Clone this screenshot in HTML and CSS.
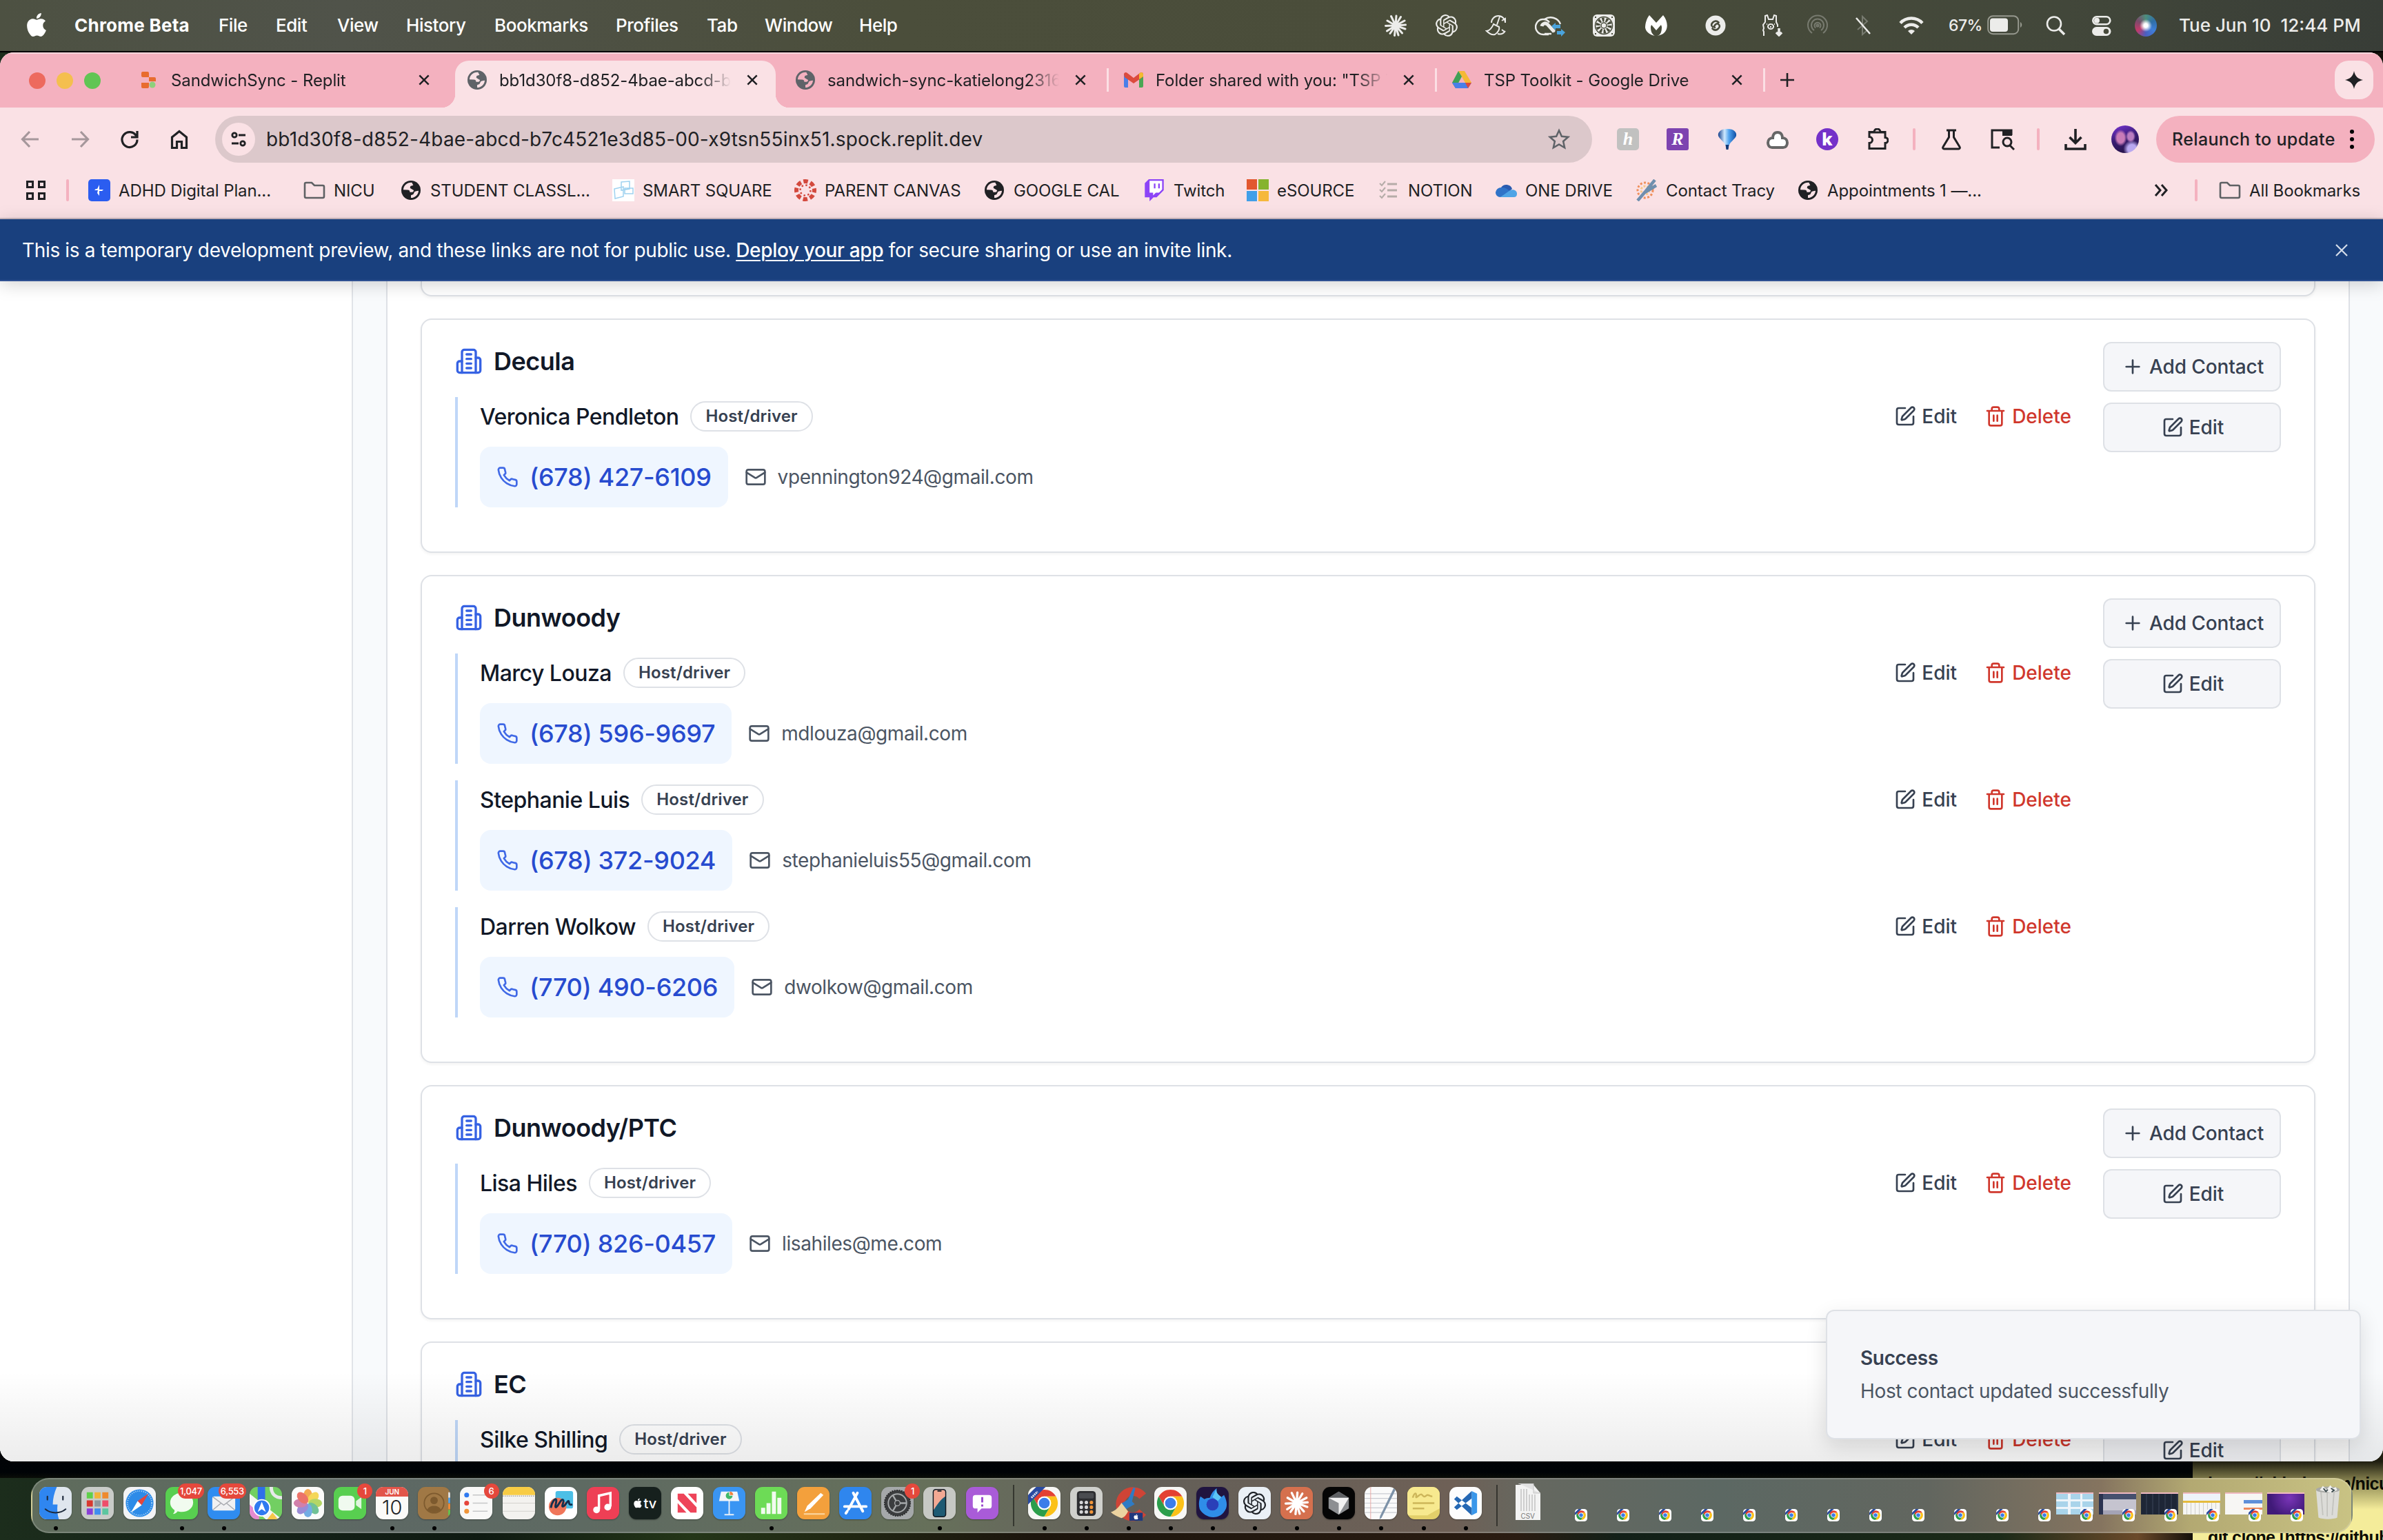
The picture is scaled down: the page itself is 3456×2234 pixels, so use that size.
FILE: index.html
```html
<!DOCTYPE html>
<html lang="en">
<head>
<meta charset="utf-8">
<title>SandwichSync</title>
<link rel="stylesheet" href="styles.css">
</head>
<body>
<svg class="defs" width="0" height="0">
  <linearGradient id="g-balloon"><stop offset="0" stop-color="#123f8c"/><stop offset=".35" stop-color="#cfeaff"/><stop offset=".6" stop-color="#4fa2ee"/><stop offset="1" stop-color="#0f4da3"/></linearGradient>
  <symbol id="building" viewBox="0 0 24 24"><path d="M6 22V4a2 2 0 0 1 2-2h8a2 2 0 0 1 2 2v18Z"/><path d="M6 12H4a2 2 0 0 0-2 2v6a2 2 0 0 0 2 2h2"/><path d="M18 9h2a2 2 0 0 1 2 2v9a2 2 0 0 1-2 2h-2"/><path d="M10 6h4M10 10h4M10 14h4M10 18h4"/></symbol>
  <symbol id="phone" viewBox="0 0 24 24"><path d="M22 16.92v3a2 2 0 0 1-2.18 2 19.79 19.79 0 0 1-8.63-3.07 19.5 19.5 0 0 1-6-6 19.79 19.79 0 0 1-3.07-8.67A2 2 0 0 1 4.11 2h3a2 2 0 0 1 2 1.72 12.84 12.84 0 0 0 .7 2.81 2 2 0 0 1-.45 2.11L8.09 9.91a16 16 0 0 0 6 6l1.27-1.27a2 2 0 0 1 2.11-.45 12.84 12.84 0 0 0 2.81.7A2 2 0 0 1 22 16.92z"/></symbol>
  <symbol id="mail" viewBox="0 0 24 24"><rect x="2" y="4" width="20" height="16" rx="2"/><path d="m22 7-8.97 5.7a1.94 1.94 0 0 1-2.06 0L2 7"/></symbol>
  <symbol id="pen" viewBox="0 0 24 24"><path d="M12 3H5a2 2 0 0 0-2 2v14a2 2 0 0 0 2 2h14a2 2 0 0 0 2-2v-7"/><path d="M18.375 2.625a1 1 0 0 1 3 3l-9.013 9.014a2 2 0 0 1-.853.505l-2.873.84a.5.5 0 0 1-.62-.62l.84-2.873a2 2 0 0 1 .506-.852z"/></symbol>
  <symbol id="trash" viewBox="0 0 24 24"><path d="M3 6h18M19 6v14a2 2 0 0 1-2 2H7a2 2 0 0 1-2-2V6M8 6V4a2 2 0 0 1 2-2h4a2 2 0 0 1 2 2v2M10 11v6M14 11v6"/></symbol>
  <symbol id="plus" viewBox="0 0 24 24"><path d="M5 12h14M12 5v14"/></symbol>
  <symbol id="x" viewBox="0 0 24 24"><path d="M4 4l16 16M20 4L4 20"/></symbol>
  <symbol id="folder" viewBox="0 0 32 32"><path d="M2 7a2 2 0 0 1 2-2h8l4 4h12a2 2 0 0 1 2 2v14a2 2 0 0 1-2 2H4a2 2 0 0 1-2-2z" fill="none" stroke="#5f6164" stroke-width="2.6"/></symbol>
  <symbol id="globe" viewBox="0 0 24 24"><circle cx="12" cy="12" r="10.5" fill="currentColor"/><path d="M13 3.6C8 3.2 4 6.600 3.700 11.500L8.500 11.600C10 11.600 10.800 12.500 10.800 14L13.200 14C14.500 14 15 13 15 12L12.500 10.500L11 9.500L11.500 7.500L14.500 6.500zM12 20.300L12 17.500L14.500 16.500L16 13.500L18.500 12.800L20.300 12.500C20 16.500 16.500 20.300 12 20.300z" class="globe-land"/></symbol>
  <symbol id="apple" viewBox="0 0 24 24"><path d="M12.152 6.896c-.948 0-2.415-1.078-3.96-1.04-2.04.027-3.91 1.183-4.961 3.014-2.117 3.675-.546 9.103 1.519 12.09 1.013 1.454 2.208 3.09 3.792 3.039 1.52-.065 2.09-.987 3.935-.987 1.831 0 2.35.987 3.96.948 1.637-.026 2.676-1.48 3.676-2.948 1.156-1.688 1.636-3.325 1.662-3.415-.039-.013-3.182-1.221-3.22-4.857-.026-3.04 2.48-4.494 2.597-4.559-1.429-2.09-3.623-2.324-4.39-2.376-2-.156-3.675 1.09-4.61 1.09zM15.53 3.83c.843-1.012 1.4-2.427 1.245-3.83-1.207.052-2.662.805-3.532 1.818-.78.896-1.454 2.338-1.273 3.714 1.338.104 2.715-.688 3.559-1.701"/></symbol>
  <symbol id="openai" viewBox="0 0 24 24"><path d="M22.2819 9.8211a5.9847 5.9847 0 0 0-.5157-4.9108 6.0462 6.0462 0 0 0-6.5098-2.9A6.0651 6.0651 0 0 0 4.9807 4.1818a5.9847 5.9847 0 0 0-3.9977 2.9 6.0462 6.0462 0 0 0 .7427 7.0966 5.98 5.98 0 0 0 .511 4.9107 6.051 6.051 0 0 0 6.5146 2.9001A5.9847 5.9847 0 0 0 13.2599 24a6.0557 6.0557 0 0 0 5.7718-4.2058 5.9894 5.9894 0 0 0 3.9977-2.9001 6.0557 6.0557 0 0 0-.7475-7.0729zm-9.022 12.6081a4.4755 4.4755 0 0 1-2.8764-1.0408l.1419-.0804 4.7783-2.7582a.7948.7948 0 0 0 .3927-.6813v-6.7369l2.02 1.1686a.071.071 0 0 1 .038.052v5.5826a4.504 4.504 0 0 1-4.4945 4.4944zm-9.6607-4.1254a4.4708 4.4708 0 0 1-.5346-3.0137l.142.0852 4.783 2.7582a.7712.7712 0 0 0 .7806 0l5.8428-3.3685v2.3324a.0804.0804 0 0 1-.0332.0615L9.74 19.9502a4.4992 4.4992 0 0 1-6.1408-1.6464zM2.3408 7.8956a4.485 4.485 0 0 1 2.3655-1.9728V11.6a.7664.7664 0 0 0 .3879.6765l5.8144 3.3543-2.0201 1.1685a.0757.0757 0 0 1-.071 0l-4.8303-2.7865A4.504 4.504 0 0 1 2.3408 7.872zm16.5963 3.8558L13.1038 8.364 15.1192 7.2a.0757.0757 0 0 1 .071 0l4.8303 2.7913a4.4944 4.4944 0 0 1-.6765 8.1042v-5.6772a.79.79 0 0 0-.407-.667zm2.0107-3.0231l-.142-.0852-4.7735-2.7818a.7759.7759 0 0 0-.7854 0L9.409 9.2297V6.8974a.0662.0662 0 0 1 .0284-.0615l4.8303-2.7866a4.4992 4.4992 0 0 1 6.6802 4.66zM8.3065 12.863l-2.02-1.1638a.0804.0804 0 0 1-.038-.0567V6.0742a4.4992 4.4992 0 0 1 7.3757-3.4537l-.142.0805L8.704 5.459a.7948.7948 0 0 0-.3927.6813zm1.0976-2.3654l2.602-1.4998 2.6069 1.4998v2.9994l-2.5974 1.4997-2.6067-1.4997Z"/></symbol>
  <symbol id="burst" viewBox="0 0 32 32"><g stroke-width="3" stroke-linecap="round" fill="none"><path d="M16 16L17 2M16 16L23.500 3.500M16 16L29 9M16 16L30.500 15M16 16L30 21M16 16L25.500 27M16 16L20 30M16 16L14.500 30.500M16 16L8 27.500M16 16L3.500 24M16 16L1.500 16.500M16 16L4 9M16 16L9.500 2.500"/></g></symbol>
  <symbol id="chrome" viewBox="0 0 24 24"><path d="M12 7H20.660A10 10 0 0 0 3.340 7L7.670 14.500A5 5 0 0 1 12 7z" fill="#e34133"/><path transform="rotate(120 12 12)" d="M12 7H20.660A10 10 0 0 0 3.340 7L7.670 14.500A5 5 0 0 1 12 7z" fill="#fbc118"/><path transform="rotate(240 12 12)" d="M12 7H20.660A10 10 0 0 0 3.340 7L7.670 14.500A5 5 0 0 1 12 7z" fill="#2c9e4b"/><circle cx="12" cy="12" r="5" fill="#fff"/><circle cx="12" cy="12" r="4" fill="#3b7de9"/></symbol>
  <symbol id="chrome-beta" viewBox="0 0 24 24"><rect width="24" height="24" rx="5.500" fill="#fff"/><use href="#chrome" x="1" y="1" width="22" height="22"/><path d="M0 12V7L7 0h6L0 12z" fill="#2b4ba0"/></symbol>
</svg>

<header class="menubar">
  <nav class="menus">
    <svg class="apple" viewBox="0 0 24 24"><use href="#apple"/></svg>
    <b>Chrome Beta</b><span>File</span><span>Edit</span><span>View</span><span>History</span><span>Bookmarks</span><span>Profiles</span><span>Tab</span><span>Window</span><span>Help</span>
  </nav>
  <div class="status">
    <svg class="s32 ink-line" viewBox="0 0 32 32"><use href="#burst"/></svg>
    <svg class="s32 ink" viewBox="0 0 24 24"><use href="#openai"/></svg>
    <svg class="s32 line" viewBox="0 0 32 32"><path d="M29 12A10 10 0 0 0 9 12M29 24a10 10 0 0 1-11 4M21 3l-4 12M12 14l8 4c1 3-1 8-6 11-4 1-8-1-12-5 4 0 8-5 10-10zM24 9l5-3v6M24 22l4 3"/></svg>
    <svg class="s44" viewBox="0 0 44 32" fill="none"><path d="M20 29H12A11 11 0 1 1 21 11.500M14 7A15 14 0 0 1 37 14M24 28H14M13 13c6-2 9 8 16 12" stroke="#ececea" stroke-width="2.500"/><path d="M10 17a5 5 0 0 1 8-3l10 11" stroke="#ececea" stroke-width="5"/><path d="M24 17l6-5v3h7v5h-7v3zM44 26l-6-5v3h-6v5h6v3z" fill="#4aa3dc"/></svg>
    <svg class="s32" viewBox="0 0 32 32"><rect width="32" height="32" rx="6" fill="#ececea"/><circle cx="16" cy="16" r="12.500" fill="none" stroke="#474a3a" stroke-width="1.500"/><circle cx="16" cy="16" r="8.500" fill="none" stroke="#474a3a" stroke-width="6" stroke-dasharray="3 2.340"/><circle cx="16" cy="16" r="4" fill="#ececea" stroke="#474a3a" stroke-width="1.500"/><path d="M3 3h2v2H3zM27 3h2v2h-2zM3 27h2v2H3zM27 27h2v2h-2z" fill="#474a3a"/></svg>
    <svg class="s32" viewBox="0 0 32 32"><path d="M6 1l10 11L26 1c5 6 7 14 5 20-2 6-7 9-14 10 5-1 7-5 7-13l-1-3-7 8-7-8-1 3c0 7 2 11 6 13C6 29 1 25 0 19 0 13 2 6 6 1z" fill="#fff"/></svg>
    <svg class="s32" viewBox="0 0 32 32"><circle cx="16" cy="16" r="14.500" fill="#ececea"/><path d="M20.500 11.500c-3-3-6-2.500-8.500 0s-2.500 5 0 6.500M11.500 20.500c3 3 6 2.500 8.500 0s2.500-5 0-6.500M20 14c-2-1.500-3-.5-4.500 1s-2 3-.5 4" fill="none" stroke="#474a3a" stroke-width="2.600" stroke-linecap="round"/></svg>
    <svg class="s32 line" viewBox="0 0 32 32"><path d="M4 31v-6l-1-2 1-3-1-5 3-4V2l3-1 2 6h6l2-6 3 1v9l2 4v3M14 14a4 3.500 0 1 0 .1 0M14 17v2M8 14h1M19 14h1"/><path d="M26 20v10M22 26l4 4 4-4" stroke-width="3.500"/></svg>
    <svg class="s32 line faint" viewBox="0 0 32 32"><path d="M8 27a14 14 0 1 1 16 0M11 23a9 9 0 1 1 10 0M13 19.500a4.500 4.500 0 1 1 6 0"/><circle cx="16" cy="16" r="1.500"/></svg>
    <svg class="s32 line" viewBox="0 0 32 32"><path class="faint" d="M8 22l14-12-7-7v26l7-6-5-5"/><path d="M6 5l20 23" stroke-width="2.500"/></svg>
    <svg class="s36" viewBox="0 0 36 32" fill="none" stroke="#ececea" stroke-width="4.500"><path d="M2 12.500a22 22 0 0 1 32 0M8 19a14 14 0 0 1 20 0"/><path d="M18 29l-5-5a7 7 0 0 1 10 0z" fill="#ececea" stroke="none"/></svg>
    <span class="pct">67%</span>
    <svg class="batt" viewBox="0 0 52 30"><rect x="1.200" y="1.200" width="44" height="26" rx="7" fill="none" stroke="#96988e" stroke-width="2"/><rect x="4" y="4.500" width="26" height="19.500" rx="4" fill="#ececea"/><path d="M48 10c3 2 3 6 0 8z" fill="#96988e"/></svg>
    <svg class="s32 line" viewBox="0 0 32 32"><circle cx="14" cy="13.500" r="10" stroke-width="2.600"/><path d="M21 21l8 8" stroke-width="3.600"/></svg>
    <svg class="s32" viewBox="0 0 32 32"><rect x="3.300" y="3.300" width="25" height="11" rx="5.500" fill="none" stroke="#ececea" stroke-width="2.600"/><circle cx="9" cy="8.800" r="4" fill="#ececea"/><rect x="2" y="18" width="27.500" height="13" rx="6.500" fill="#ececea"/><circle cx="22.500" cy="24.500" r="3.800" fill="#474a3a"/></svg>
    <i class="siri"></i>
    <span class="clock">Tue Jun 10&nbsp; 12:44 PM</span>
  </div>
</header>

<main class="window">
  <div class="tabs">
    <div class="lights"><i class="red"></i><i class="amber"></i><i class="green"></i></div>
    <div class="tab"><div class="tab-body">
      <svg class="s32" viewBox="0 0 32 32"><path d="M7 4h7a2 2 0 0 1 2 2v6H7a2 2 0 0 1-2-2V6a2 2 0 0 1 2-2zM16 12h8a2 2 0 0 1 2 2v4h-10zM5 20h11v6a2 2 0 0 1-2 2H7a2 2 0 0 1-2-2z" fill="#e86c2f"/><circle cx="21" cy="23" r="4.500" fill="#8fd07c"/></svg>
      <span>SandwichSync - Replit</span><svg class="close" viewBox="0 0 24 24"><use href="#x"/></svg></div></div>
    <div class="tab active"><div class="tab-body">
      <svg class="s32 globe-grey" viewBox="0 0 24 24"><use href="#globe"/></svg>
      <span>bb1d30f8-d852-4bae-abcd-b7c4521e3d85</span><svg class="close" viewBox="0 0 24 24"><use href="#x"/></svg></div></div>
    <div class="tab ruled"><div class="tab-body">
      <svg class="s32 globe-grey on-strip" viewBox="0 0 24 24"><use href="#globe"/></svg>
      <span>sandwich-sync-katielong2316.replit</span><svg class="close" viewBox="0 0 24 24"><use href="#x"/></svg></div></div>
    <div class="tab ruled"><div class="tab-body">
      <svg class="s32" viewBox="0 0 32 32"><path d="M2 7l6 4v16H4a2 2 0 0 1-2-2z" fill="#4a7fe8"/><path d="M30 7l-6 4v16h4a2 2 0 0 0 2-2z" fill="#4aa653"/><path d="M2 8c0-3 3-4 5-2l9 7 9-7c2-2 5-1 5 2l-1 4-13 9L3 12z" fill="#dc4a3d"/><path d="M24 7l1-1c2-2 5-1 5 2v3l-6 4z" fill="#f3bb31"/></svg>
      <span>Folder shared with you: "TSP Toolkit</span><svg class="close" viewBox="0 0 24 24"><use href="#x"/></svg></div></div>
    <div class="tab ruled"><div class="tab-body">
      <svg class="s32" viewBox="0 0 32 32"><path d="M11 3h9l10 17h-9z" fill="#f5b934"/><path d="M11 3l5 8L7 28 2 20z" fill="#3fa055"/><path d="M2 20h28l-5 8H7z" fill="#4a7fe8"/><path d="M21 20h9l-5 8z" fill="#dc4a3d"/></svg>
      <span>TSP Toolkit - Google Drive</span><svg class="close" viewBox="0 0 24 24"><use href="#x"/></svg></div></div>
    <svg class="newtab" viewBox="0 0 24 24"><path d="M12 2v20M2 12h20"/></svg>
    <div class="spark"><svg viewBox="0 0 24 24"><path d="M12 0c1.500 7 5 10.500 12 12-7 1.500-10.500 5-12 12-1.500-7-5-10.500-12-12C7 10.500 10.500 7 12 0z"/></svg></div>
  </div>

  <div class="toolbar">
    <svg class="s40 nav-off" viewBox="0 0 40 40"><path d="M32 20H9M19 9L8.500 20 19 31"/></svg>
    <svg class="s40 nav-off" viewBox="0 0 40 40"><path d="M8 20h23M21 9l10.500 11L21 31"/></svg>
    <svg class="s40 nav" viewBox="0 0 40 40"><path d="M29.500 15A11 11 0 1 0 31 20.500M31 8v9h-9"/></svg>
    <svg class="s40 nav" viewBox="0 0 40 40"><path d="M9.500 17L20 8.500 30.500 17v15.500h-7v-9h-7v9h-7z"/></svg>
    <div class="omnibox">
      <span class="site"><svg viewBox="0 0 28 28"><path d="M14 8h10M4 20h10"/><circle cx="8" cy="8" r="3.200"/><circle cx="20" cy="20" r="3.200"/></svg></span>
      <span class="url">bb1d30f8-d852-4bae-abcd-b7c4521e3d85-00-x9tsn55inx51.spock.replit.dev</span>
      <svg class="star" viewBox="0 0 24 24"><path d="M12 2.500l2.900 6.400 7 .7-5.300 4.700 1.500 6.900-6.100-3.600-6.100 3.600 1.500-6.900L2.100 9.600l7-.7z"/></svg>
    </div>
    <i class="ext honey">h</i>
    <i class="ext rakuten">R</i>
    <svg class="s32" viewBox="0 0 32 32"><path d="M16 1c10 0 14 5 13 10-1 4-9 9-10.500 14h-5C12 20 4 15 3 11 2 6 6 1 16 1z" fill="url(#g-balloon)"/><path d="M13.500 24h5L17.500 31h-3z" fill="#123a78"/></svg>
    <svg class="s32" viewBox="0 0 32 32"><path d="M16 6c5 0 7 4 7 8 4 0 7 3 7 7s-2 7-6 7H8c-4 0-6-3-6-7s3-7 7-7c0-4 2-8 7-8z" fill="#fff" stroke="#666" stroke-width="4"/></svg>
    <i class="ext kami">k</i>
    <svg class="s32 dark" viewBox="0 0 32 32"><path d="M4 6h24M4 5.500h7a4.500 4.500 0 0 1 9 0h7v8a4 4 0 0 1 0 8v8H4v-8a4.500 4.500 0 0 0 0-9z"/></svg>
    <hr>
    <svg class="s32 dark" viewBox="0 0 32 32"><path d="M9 3h14M12.500 3v10L4 27c-1 1.500 0 3 1.500 3h21c1.500 0 2.500-1.500 1.500-3L19.500 13V3"/></svg>
    <svg class="s36 dark" viewBox="0 0 36 32"><path d="M14 28H3V3h28v7"/><path d="M18 2h14v9H18z" fill="#202124" stroke="none"/><circle cx="25" cy="20" r="6"/><path d="M29 25l6 6"/></svg>
    <hr>
    <svg class="s32 dark thick" viewBox="0 0 32 32"><path d="M16 1v20M7.500 13L16 21.500 24.500 13M2 23v7h28v-7"/></svg>
    <i class="avatar"></i>
    <button class="relaunch">Relaunch to update<svg viewBox="0 0 8 32"><circle cx="4" cy="5" r="3"/><circle cx="4" cy="16" r="3"/><circle cx="4" cy="27" r="3"/></svg></button>
  </div>

  <div class="bookmarks">
    <svg class="s32 dark" viewBox="0 0 32 32"><path d="M3.500 3.500h8v8h-8zM20.500 3.500h8v8h-8zM3.500 20.500h8v8h-8zM20.500 20.500h8v8h-8z"/></svg>
    <hr>
    <a><svg class="s32" viewBox="0 0 32 32"><rect width="32" height="32" rx="5" fill="#2b5df0"/><path d="M16 8v7h6l-2 2h-4v7l-3-4 1-4H9l2-2h2z" fill="#fff"/></svg>ADHD Digital Plan...</a>
    <a><svg class="s32" viewBox="0 0 32 32"><use href="#folder"/></svg>NICU</a>
    <a><svg class="s32" viewBox="0 0 24 24"><use href="#globe"/></svg>STUDENT CLASSL...</a>
    <a><svg class="s32" viewBox="0 0 32 32"><rect width="32" height="32" fill="#fff"/><path d="M13 4l12-1v11l-12 2zM3 14l13-3v14L4 28zM18 13h12v8H18z" fill="none" stroke="#9fd2f0" stroke-width="1.500"/></svg>SMART SQUARE</a>
    <a><svg class="s32" viewBox="0 0 32 32"><circle cx="16" cy="16" r="13" fill="none" stroke="#d3493d" stroke-width="6" stroke-dasharray="6.500 3.710" stroke-dashoffset="3.200"/><circle cx="16" cy="16" r="7.500" fill="none" stroke="#d3493d" stroke-width="2.500" stroke-dasharray="2.500 3.390"/></svg>PARENT CANVAS</a>
    <a><svg class="s32" viewBox="0 0 24 24"><use href="#globe"/></svg>GOOGLE CAL</a>
    <a><svg class="s32" viewBox="0 0 24 24"><path d="M7 1h14v11l-6 5H7z" fill="#fff"/><path fill="#8c44f7" d="M11.571 4.714h1.715v5.143H11.570zm4.715 0H18v5.143h-1.714zM6 0L1.714 4.286v15.428h5.143V24l4.286-4.286h3.428L22.286 12V0zm14.571 11.143l-3.428 3.428h-3.429l-3 3v-3H6.857V1.714h13.714Z"/></svg>Twitch</a>
    <a><svg class="s32" viewBox="0 0 32 32"><path d="M0 0h15v15H0z" fill="#e2572f"/><path d="M17 0h15v15H17z" fill="#86b32f"/><path d="M0 17h15v15H0z" fill="#419fe8"/><path d="M17 17h15v15H17z" fill="#f6b83c"/></svg>eSOURCE</a>
    <a><svg class="s32" viewBox="0 0 32 32" fill="none" stroke="#b5aca8" stroke-width="3"><path d="M14 7h14M14 16h14M14 25h14"/><path d="M3 6l3 3 5-6M3 15l3 3 5-6M3 24l3 3 5-6" stroke-width="2"/></svg>NOTION</a>
    <a><svg class="s32" viewBox="0 0 32 32"><path d="M9 12a9 9 0 0 1 16 2l-9 8z" fill="#2a5bb0"/><path d="M9 12a8 8 0 0 0-8 7c0 4 3 7 7 7l14-8c-4-5-8-6-13-6z" fill="#2f73c8"/><path d="M8 26l14-10c6-2 10 1 10 5s-2 5-5 5z" fill="#4fa4e6"/></svg>ONE DRIVE</a>
    <a><svg class="s32" viewBox="0 0 32 32" fill="none" stroke-width="3"><circle cx="14" cy="16" r="11" stroke="#ef8f5b" stroke-dasharray="3 2.500"/><circle cx="14" cy="16" r="6" stroke="#f6c98a" stroke-dasharray="3 2"/><path d="M3 31L15 17 28 1M12 20L30 9" stroke="#6f8fae" stroke-width="4.500"/></svg>Contact Tracy</a>
    <a><svg class="s32" viewBox="0 0 24 24"><use href="#globe"/></svg>Appointments 1 —...</a>
    <svg class="more dark" viewBox="0 0 24 24"><path d="M4 4l7 8-7 8M13 4l7 8-7 8"/></svg>
    <hr>
    <a><svg class="s32" viewBox="0 0 32 32"><use href="#folder"/></svg>All Bookmarks</a>
  </div>

  <div class="banner">
    <p>This is a temporary development preview, and these links are not for public use. <a>Deploy your app</a> for secure sharing or use an invite link.</p>
    <svg viewBox="0 0 24 24"><use href="#x"/></svg>
  </div>

  <div class="page">
    <aside class="sidebar"></aside>
    <section class="panel">
      <article class="card stub"></article>

      <article class="card">
        <div class="host">
          <h3><svg viewBox="0 0 24 24"><use href="#building"/></svg>Decula</h3>
          <div class="contact">
            <div class="row"><span class="name">Veronica Pendleton</span><span class="badge">Host/driver</span><span class="acts"><a><svg><use href="#pen"/></svg>Edit</a><a class="del"><svg><use href="#trash"/></svg>Delete</a></span></div>
            <div class="row reach"><a class="tel"><svg><use href="#phone"/></svg>(678) 427-6109</a><a class="mail"><svg><use href="#mail"/></svg>vpennington924@gmail.com</a></div>
          </div>
        </div>
        <div class="buttons"><button><svg class="pl"><use href="#plus"/></svg>Add Contact</button><button class="ed"><svg><use href="#pen"/></svg>Edit</button></div>
      </article>

      <article class="card">
        <div class="host">
          <h3><svg viewBox="0 0 24 24"><use href="#building"/></svg>Dunwoody</h3>
          <div class="contact">
            <div class="row"><span class="name">Marcy Louza</span><span class="badge">Host/driver</span><span class="acts"><a><svg><use href="#pen"/></svg>Edit</a><a class="del"><svg><use href="#trash"/></svg>Delete</a></span></div>
            <div class="row reach"><a class="tel"><svg><use href="#phone"/></svg>(678) 596-9697</a><a class="mail"><svg><use href="#mail"/></svg>mdlouza@gmail.com</a></div>
          </div>
          <div class="contact">
            <div class="row"><span class="name">Stephanie Luis</span><span class="badge">Host/driver</span><span class="acts"><a><svg><use href="#pen"/></svg>Edit</a><a class="del"><svg><use href="#trash"/></svg>Delete</a></span></div>
            <div class="row reach"><a class="tel"><svg><use href="#phone"/></svg>(678) 372-9024</a><a class="mail"><svg><use href="#mail"/></svg>stephanieluis55@gmail.com</a></div>
          </div>
          <div class="contact">
            <div class="row"><span class="name">Darren Wolkow</span><span class="badge">Host/driver</span><span class="acts"><a><svg><use href="#pen"/></svg>Edit</a><a class="del"><svg><use href="#trash"/></svg>Delete</a></span></div>
            <div class="row reach"><a class="tel"><svg><use href="#phone"/></svg>(770) 490-6206</a><a class="mail"><svg><use href="#mail"/></svg>dwolkow@gmail.com</a></div>
          </div>
        </div>
        <div class="buttons"><button><svg class="pl"><use href="#plus"/></svg>Add Contact</button><button class="ed"><svg><use href="#pen"/></svg>Edit</button></div>
      </article>

      <article class="card">
        <div class="host">
          <h3><svg viewBox="0 0 24 24"><use href="#building"/></svg>Dunwoody/PTC</h3>
          <div class="contact">
            <div class="row"><span class="name">Lisa Hiles</span><span class="badge">Host/driver</span><span class="acts"><a><svg><use href="#pen"/></svg>Edit</a><a class="del"><svg><use href="#trash"/></svg>Delete</a></span></div>
            <div class="row reach"><a class="tel"><svg><use href="#phone"/></svg>(770) 826-0457</a><a class="mail"><svg><use href="#mail"/></svg>lisahiles@me.com</a></div>
          </div>
        </div>
        <div class="buttons"><button><svg class="pl"><use href="#plus"/></svg>Add Contact</button><button class="ed"><svg><use href="#pen"/></svg>Edit</button></div>
      </article>

      <article class="card">
        <div class="host">
          <h3><svg viewBox="0 0 24 24"><use href="#building"/></svg>EC</h3>
          <div class="contact">
            <div class="row"><span class="name">Silke Shilling</span><span class="badge">Host/driver</span><span class="acts"><a><svg><use href="#pen"/></svg>Edit</a><a class="del"><svg><use href="#trash"/></svg>Delete</a></span></div>
          </div>
        </div>
        <div class="buttons last"><button class="ed"><svg><use href="#pen"/></svg>Edit</button></div>
      </article>
    </section>
    <div class="toast"><strong>Success</strong><p>Host contact updated successfully</p></div>
  </div>
</main>

<div class="sticky"><p>https://github.com/nicu</p><p>git clone [https://github.com</p></div>

<footer class="dock">
  <div class="app on"><svg viewBox="0 0 48 48"><path d="M0 0h48v48H0z" fill="#dfe6ee"/><path d="M0 0h26c-4 9-6 18-6 26h7c-1 8 0 15 2 22H0z" fill="#2f86f0"/><path d="M12 14v5M35 14v5M9 33c8 7 22 7 30 0" fill="none" stroke="#1d2a3c" stroke-width="2.200" stroke-linecap="round"/></svg></div>
  <div class="app"><svg viewBox="0 0 48 48"><path d="M0 0h48v48H0z" fill="#c9ccc9"/><path d="M8 8h9v9H8z" fill="#5fd04a"/><path d="M19.500 8h9v9h-9z" fill="#f2b33a"/><path d="M31 8h9v9h-9z" fill="#ee8a2e"/><path d="M8 20h9v9H8z" fill="#d8392f"/><path d="M19.500 20h9v9h-9z" fill="#8f979c"/><path d="M31 20h9v9h-9z" fill="#ee4e6a"/><path d="M8 32h9v9H8z" fill="#8a3fd8"/><path d="M19.500 32h9v9h-9z" fill="#3f8df0"/><path d="M31 32h9v9h-9z" fill="#5cc6a0"/></svg></div>
  <div class="app"><svg viewBox="0 0 48 48"><path d="M0 0h48v48H0z" fill="#f2f3f5"/><circle cx="24" cy="24" r="20.500" fill="#2d8be8"/><circle cx="24" cy="24" r="18" fill="none" stroke="#bfe0fa" stroke-width="2" stroke-dasharray="1 2"/><path d="M37 10L21 21l6 6z" fill="#e5453b"/><path d="M11 38l10-17 6 6z" fill="#fff"/></svg></div>
  <div class="app on"><svg viewBox="0 0 48 48"><path d="M0 0h48v48H0z" fill="#58cf50"/><path d="M24 9c10 0 17 6 17 14s-7 14-17 14c-2 0-4 0-6-1-1 2-4 4-7 4 2-2 3-4 2-6-4-3-6-6-6-11C7 15 14 9 24 9z" fill="#f1fbef"/></svg><em>1,047</em></div>
  <div class="app on"><svg viewBox="0 0 48 48"><path d="M0 0h48v48H0z" fill="#2f8cf0"/><rect x="7" y="14" width="34" height="21" rx="3" fill="#f0f1f2"/><path d="M8 15l16 12 16-12M8 34l12-10M40 34L28 24" fill="none" stroke="#a9abb0" stroke-width="1.500"/></svg><em>6,553</em></div>
  <div class="app"><svg viewBox="0 0 48 48"><path d="M0 0h48v48H0z" fill="#72cf62"/><path d="M0 20h14v28H0z" fill="#e58ad0"/><path d="M0 10l48 38H24L0 26z" fill="#f4f5f3"/><path d="M26 48l8-10 8 10z" fill="#f5c748"/><path d="M12 0h11v28H12z" fill="#2f6fe8"/><path d="M32 0c0 10 6 16 16 16" fill="none" stroke="#e8e9ea" stroke-width="5"/><circle cx="18" cy="31" r="12" fill="#2f7af0" stroke="#fff" stroke-width="2"/><path d="M18 22l6 15-6-4-6 4z" fill="#fff"/></svg></div>
  <div class="app"><svg viewBox="0 0 48 48"><path d="M0 0h48v48H0z" fill="#fbfbfa"/><g opacity=".85"><ellipse cx="24" cy="13" rx="6.500" ry="10" fill="#f29a36"/><ellipse cx="24" cy="13" rx="6.500" ry="10" fill="#f2d13d" transform="rotate(45 24 24)"/><ellipse cx="24" cy="13" rx="6.500" ry="10" fill="#a7cf4c" transform="rotate(90 24 24)"/><ellipse cx="24" cy="13" rx="6.500" ry="10" fill="#59b784" transform="rotate(135 24 24)"/><ellipse cx="24" cy="13" rx="6.500" ry="10" fill="#5b9fe0" transform="rotate(180 24 24)"/><ellipse cx="24" cy="13" rx="6.500" ry="10" fill="#8a78cf" transform="rotate(225 24 24)"/><ellipse cx="24" cy="13" rx="6.500" ry="10" fill="#c9699d" transform="rotate(270 24 24)"/><ellipse cx="24" cy="13" rx="6.500" ry="10" fill="#e95b50" transform="rotate(315 24 24)"/></g></svg></div>
  <div class="app"><svg viewBox="0 0 48 48"><path d="M0 0h48v48H0z" fill="#58cf50"/><rect x="7" y="13" width="24" height="22" rx="6" fill="#f0faef"/><path d="M33 21l8-6v18l-8-6z" fill="#e0f5de"/></svg><em>1</em></div>
  <div class="app on"><div class="cal"><small>JUN</small><span>10</span></div></div>
  <div class="app on"><svg viewBox="0 0 48 48"><path d="M0 0h48v48H0z" fill="#a07845"/><path d="M45 8h3v8h-3z" fill="#ddd"/><path d="M45 16h3v8h-3z" fill="#4fa0e8"/><path d="M45 25h3v8h-3z" fill="#f08a35"/><path d="M45 34h3v8h-3z" fill="#62c34e"/><circle cx="24" cy="24" r="14.500" fill="none" stroke="#7d5a2e" stroke-width="1.800"/><circle cx="24" cy="20" r="5.500" fill="#7d5a2e"/><path d="M14 34c2-8 18-8 20 0-5 5-15 5-20 0z" fill="#7d5a2e"/></svg></div>
  <div class="app"><svg viewBox="0 0 48 48"><path d="M0 0h48v48H0z" fill="#f8f8f7"/><circle cx="10" cy="12" r="3.600" fill="#2f7af0"/><circle cx="10" cy="24" r="3.600" fill="#e5453b"/><circle cx="10" cy="36" r="3.600" fill="#f0953a"/><path d="M19 12h22M19 24h22M19 36h22" stroke="#c5c6c8" stroke-width="1.500"/></svg><em>6</em></div>
  <div class="app"><svg viewBox="0 0 48 48"><path d="M0 0h48v48H0z" fill="#f3f2ef"/><path d="M0 0h48v12H0z" fill="#f8cc44"/><path d="M0 13.500h48" stroke="#a5a5a3" stroke-width="1.500" stroke-dasharray="1.500 1.500"/><path d="M0 24h48M0 36h48" stroke="#d4d2cd" stroke-width="1.200"/></svg></div>
  <div class="app"><svg viewBox="0 0 48 48"><path d="M0 0h48v48H0z" fill="#fff"/><rect x="16" y="6" width="26" height="26" rx="3" fill="#4cbfe6"/><circle cx="19" cy="29" r="13" fill="#f0765a"/><path d="M9 31c2-10 7-15 8-12s-3 12 0 11 7-13 10-11-3 10 0 10 6-8 8-8-1 7 6 5" fill="none" stroke="#14304e" stroke-width="3"/></svg></div>
  <div class="app"><svg viewBox="0 0 48 48"><path d="M0 0h48v48H0z" fill="#ee3f55"/><path d="M18 33V13l17-4v20" fill="none" stroke="#fff" stroke-width="3.500"/><circle cx="14.500" cy="34" r="5" fill="#fff"/><circle cx="31" cy="30" r="5" fill="#fff"/></svg></div>
  <div class="app"><div class="tv"><svg viewBox="0 0 24 24"><use href="#apple"/></svg>tv</div></div>
  <div class="app"><svg viewBox="0 0 48 48"><path d="M0 0h48v48H0z" fill="#fff"/><path d="M10 10h9l19 20v8h-9L10 18zM10 24l13 14H10zM25 10h13v14z" fill="#ee4459"/></svg></div>
  <div class="app"><svg viewBox="0 0 48 48"><path d="M0 0h48v48H0z" fill="#3a95f3"/><path d="M24 20v20M17 41h14" stroke="#e6eef8" stroke-width="2"/><path d="M12 7h24l3 14H9z" fill="#f3f5f8"/><path d="M24 8v5h5a5 5 0 1 1-5-5z" fill="#41b96a"/><path d="M25 7a5 5 0 0 1 5 5h-5z" fill="#f0803c"/></svg></div>
  <div class="app on"><svg viewBox="0 0 48 48"><path d="M0 0h48v48H0z" fill="#6ddb56"/><path d="M9 31h6v9H9zM17 24h6v16h-6zM25 7h6v33h-6zM33 16h6v24h-6z" fill="#f2fbf0"/></svg></div>
  <div class="app"><svg viewBox="0 0 48 48"><path d="M0 0h48v48H0z" fill="#f3a03c"/><path d="M10 40h31" stroke="#fbd9a5" stroke-width="2"/><path d="M11 37l4-9L35 9l4 3-19 20z" fill="#fff"/></svg></div>
  <div class="app"><svg viewBox="0 0 48 48"><path d="M0 0h48v48H0z" fill="#2f86ee"/><path d="M27 9L14 33M21 9l14 27M8 29h22M34 29h6M12 36l-2 3" fill="none" stroke="#fff" stroke-width="4" stroke-linecap="round"/></svg></div>
  <div class="app"><svg viewBox="0 0 48 48"><path d="M0 0h48v48H0z" fill="#a5a8aa"/><circle cx="24" cy="24" r="19" fill="#3b3d3f" stroke="#2a2b2c" stroke-width="2" stroke-dasharray="2 1.500"/><circle cx="24" cy="24" r="13.500" fill="none" stroke="#a5a8aa" stroke-width="2"/><path d="M24 24h14M24 24l-7-12M24 24l-7 12" stroke="#a5a8aa" stroke-width="2.500"/><circle cx="24" cy="24" r="4" fill="#3b3d3f" stroke="#a5a8aa" stroke-width="1.500"/></svg><em>1</em></div>
  <div class="app on"><svg viewBox="0 0 48 48"><path d="M0 0h48v48H0z" fill="#c6c8c4"/><rect x="14" y="3" width="20" height="42" rx="4.500" fill="#121820"/><rect x="15.500" y="4.500" width="17" height="39" rx="3.500" fill="#1e5a73"/><path d="M15.500 8a3.500 3.500 0 0 1 3.500-3.500h10a3.500 3.500 0 0 1 3.500 3.500v6c-6 4-12 12-17 20z" fill="#f2a893"/><path d="M21 5h6v2h-6z" fill="#121820"/></svg></div>
  <div class="app"><svg viewBox="0 0 48 48"><path d="M0 0h48v48H0z" fill="#a95bd8"/><path d="M14 12h20a4 4 0 0 1 4 4v12a4 4 0 0 1-4 4H23l-6 6v-6h-3a4 4 0 0 1-4-4V16a4 4 0 0 1 4-4z" fill="#fff"/><path d="M24 15v8M24 26v3" stroke="#9a48ce" stroke-width="3"/></svg></div>
  <i class="rule"></i>
  <div class="app on"><svg viewBox="0 0 48 48"><path d="M0 0h48v48H0z" fill="#f7f7f5"/><use href="#chrome" x="0" y="0" width="48" height="48"/><path d="M0 26V12L12 0h14z" fill="#2b4ba0"/><path d="M5 16l9-9" stroke="#dfe6f5" stroke-width="3" stroke-dasharray="2 1"/></svg></div>
  <div class="app on"><svg viewBox="0 0 48 48"><path d="M0 0h48v48H0z" fill="#cfd0cc"/><rect x="10" y="6" width="28" height="37" rx="5" fill="#2c2d30"/><rect x="13" y="9" width="22" height="8" rx="2" fill="#4a4c50"/><g fill="#d5d6d8"><circle cx="16.500" cy="23" r="2.600"/><circle cx="24" cy="23" r="2.600"/><circle cx="16.500" cy="30" r="2.600"/><circle cx="24" cy="30" r="2.600"/><circle cx="16.500" cy="37" r="2.600"/><circle cx="24" cy="37" r="2.600"/></g><g fill="#f0953a"><circle cx="31.500" cy="23" r="2.600"/><circle cx="31.500" cy="30" r="2.600"/><circle cx="31.500" cy="37" r="2.600"/></g></svg></div>
  <div class="app on"><svg class="free" viewBox="0 0 56 56"><path d="M50 17a19 19 0 1 0 0 24" fill="none" stroke="#cf4436" stroke-width="13"/><path d="M36 4l3 1-5 20 4 4-14 8-6-9 10-6z" fill="#2f7bc4"/><path d="M18 27l10 13c-3 6-6 9-10 10-6-2-12-5-16-9 7-2 12-7 16-14z" fill="#ecd3a0"/><path d="M30 42h20v12H30z" fill="#20397f"/><use href="#apple" x="36" y="43.500" width="8" height="9" fill="#fff"/></svg></div>
  <div class="app on"><svg viewBox="0 0 48 48"><path d="M0 0h48v48H0z" fill="#f7f7f5"/><use href="#chrome" x="0" y="0" width="48" height="48"/></svg></div>
  <div class="app on"><svg viewBox="0 0 48 48"><path d="M0 0h48v48H0z" fill="#201440"/><path d="M6 14l6 4c2-1 5-2 8-2 2-6 5-10 10-14-1 7 2 9 7 13l4-3c4 8 5 14 3 20-4 9-11 13-19 13S9 40 5 33c-2-7-1-13 1-19z" fill="#2f8de8"/><circle cx="24" cy="26" r="9" fill="#2a3fb8"/><path d="M30 2c-1 7 2 9 7 13l-5 6-8-6z" fill="#5cc4f5"/></svg></div>
  <div class="app on"><svg viewBox="0 0 48 48"><path d="M0 0h48v48H0z" fill="#eaf0f6"/><use href="#openai" x="7" y="7" width="34" height="34" fill="#20242a"/></svg></div>
  <div class="app on"><svg viewBox="0 0 48 48"><path d="M0 0h48v48H0z" fill="#d5704e"/><use href="#burst" x="6" y="6" width="36" height="36" stroke="#fff"/></svg></div>
  <div class="app on"><svg viewBox="0 0 48 48"><path d="M0 0h48v48H0z" fill="#050505"/><path d="M24 7l15 9v16l-15 9-15-9V16z" fill="#8d8f92"/><path d="M24 7l15 9-15 3L9 16z" fill="#5e6063"/><path d="M9 16h30L24 41V24z" fill="#f2f2f2"/></svg></div>
  <div class="app on"><svg viewBox="0 0 48 48"><path d="M0 0h48v48H0z" fill="#fafafa"/><path d="M0 10h48M0 17h48M0 24h48M0 31h48M0 38h48" stroke="#c9ccd2" stroke-width="1.200"/><path d="M9 0v48" stroke="#e9a9a6"/><path d="M44 0l3 2-22 44-3 2 1-5z" fill="#7d92a8"/></svg></div>
  <div class="app on"><svg viewBox="0 0 48 48"><path d="M0 0h48v48H0z" fill="#e2cf6a"/><path d="M0 0h48v32c-8 4-14 8-18 10H0z" fill="#f7e98f"/><path d="M8 16c3-9 6-7 5-2s6-5 8-3 4 5 7 2 4 1 9 1M8 24h32M8 32h17" fill="none" stroke="#cdb65a" stroke-width="2.500"/></svg></div>
  <div class="app on"><svg viewBox="0 0 48 48"><path d="M0 0h48v48H0z" fill="#fdfdfd"/><path d="M33 6l8 4v28l-8 4z" fill="#3a97ea"/><path d="M33 6L7 30l4 4 22-17zM33 42L7 18l4-4 22 17z" fill="#2568b4"/></svg></div>
  <i class="rule"></i>
  <div class="app doc"><svg viewBox="0 0 38 54"><path d="M1 2h26l10 12v39H1z" fill="#f3f3f3"/><path d="M5 0h22v14h10" fill="#e2e2e2" stroke="#c4c4c4"/><path d="M9 8v32M13 8v32M17 8v32M21 16v24M25 16v24M29 16v24" stroke="#c2c2c2" stroke-width="1.500"/></svg><small>CSV</small></div>
  <div class="app mini"><svg><use href="#chrome-beta"/></svg></div>
  <div class="app mini"><svg><use href="#chrome-beta"/></svg></div>
  <div class="app mini"><svg><use href="#chrome-beta"/></svg></div>
  <div class="app mini"><svg><use href="#chrome-beta"/></svg></div>
  <div class="app mini"><svg><use href="#chrome-beta"/></svg></div>
  <div class="app mini"><svg><use href="#chrome-beta"/></svg></div>
  <div class="app mini"><svg><use href="#chrome-beta"/></svg></div>
  <div class="app mini"><svg><use href="#chrome-beta"/></svg></div>
  <div class="app mini"><svg><use href="#chrome-beta"/></svg></div>
  <div class="app mini"><svg><use href="#chrome-beta"/></svg></div>
  <div class="app mini"><svg><use href="#chrome-beta"/></svg></div>
  <div class="app mini"><svg><use href="#chrome-beta"/></svg></div>
  <div class="app mini"><i class="thumb t1"></i><svg><use href="#chrome-beta"/></svg></div>
  <div class="app mini"><i class="thumb t2"></i><svg><use href="#chrome-beta"/></svg></div>
  <div class="app mini"><i class="thumb t3"></i><svg><use href="#chrome-beta"/></svg></div>
  <div class="app mini"><i class="thumb t4"></i><svg><use href="#chrome-beta"/></svg></div>
  <div class="app mini"><i class="thumb t5"></i><svg><use href="#chrome-beta"/></svg></div>
  <div class="app mini"><i class="thumb t6"></i><svg><use href="#chrome-beta"/></svg></div>
  <div class="app doc"><svg viewBox="0 0 42 54"><path d="M2 6h38l-4 46c-6 3-24 3-30 0z" fill="#dcdcd8"/><path d="M10 10l3 38M20 10v40M31 10l-3 38" stroke="#c3c3be" stroke-width="2"/><ellipse cx="21" cy="7" rx="19" ry="5" fill="#a9aaa6"/><path d="M8 8l5-7 6 6 6-7 4 5 5-2 2 5-10 4z" fill="#f0f0ee"/><path d="M14 5l4 5 3-3M26 5l5 3-4 3" fill="none" stroke="#3b4a4c" stroke-width="2"/></svg></div>
</footer>
</body>
</html>
```
FILE: styles.css
```css
* { box-sizing: border-box; }
body {
  margin: 0; width: 3456px; height: 2234px; overflow: hidden; position: relative;
  display: flex; flex-direction: column;
  font-family: Inter, "Liberation Sans", sans-serif; color: #202124;
  background: linear-gradient(90deg, #1c2d1c 0, #16241a 300px, #0f1a12 700px, #243618 1000px, #1c150d 1500px, #2a1c12 2200px, #122018 2350px, #1b2a18 2900px, #6b4a2a 3100px, #14100a 3180px);
}
i { font-style: normal; }
p, h3 { margin: 0; }
svg { display: block; flex: none; }
.defs { position: absolute; }
.s32 { width: 32px; height: 32px; }
.s36 { width: 36px; height: 32px; }
.s40 { width: 40px; height: 40px; }
.s44 { width: 44px; height: 32px; }

/* macOS menu bar */
.menubar {
  flex: none; height: 76px; border-bottom: 2px solid #000; display: flex; justify-content: space-between; align-items: center;
  background: linear-gradient(90deg, #4d5142 0, #50534a 500px, #4b4e3b 1300px, #4a4d3a 2100px, #42473a 3000px, #383d37 3456px);
  color: #fff; font-size: 26px; font-weight: 500; letter-spacing: -0.45px; line-height: 74px; white-space: nowrap;
}
.menus { display: grid; grid-template-columns: 72px 209px 83px 89px 100px 128px 176px 132px 84px 137px 80px; padding-left: 36px; align-items: center; margin-top: 0; }
.menus b { font-weight: 700; letter-spacing: .25px; }
.apple { width: 34px; height: 34px; fill: #fff; margin-top: -3px; }
.status {
  display: grid; align-items: center; width: 1448px; color: #ececea;
  grid-template-columns: 74px 72px 72px 84px 76px 86px 82px 66px 66px 68px 72px 56px 83px 67px 64px 64px 1fr;
}
.ink { fill: #ececea; }
.ink-line { stroke: #ececea; }
.line { fill: none; stroke: #ececea; stroke-width: 2; }
.faint { opacity: .3; }
.pct { font-size: 23px; letter-spacing: -.6px; }
.batt { width: 52px; height: 30px; }
.siri { width: 32px; height: 32px; border-radius: 50%; background: radial-gradient(circle at 50% 50%, #fff 0 12%, transparent 40%), conic-gradient(#4d8f7c, #2f6fa8, #3f7fd8, #4a5fc0, #c23a6a, #7a4a6a, #4d8f7c); }
.clock { font-size: 26px; letter-spacing: 0; }

/* browser window */
.window { flex: none; height: 2044px; border-radius: 20px; overflow: hidden; background: #fff; display: flex; flex-direction: column; position: relative; z-index: 1; }
.tabs { flex: none; height: 80px; background: #f4b1bf; border-top: 2px solid #fbd6dd; padding-top: 10px; display: flex; }
.lights { width: 184px; padding: 17px 0 0 42px; display: flex; gap: 16px; }
.lights i { width: 24px; height: 24px; border-radius: 50%; }
.red { background: #ed6a5e; } .amber { background: #f4bf4f; } .green { background: #61c554; }
.tab { width: 476px; padding-right: 11px; display: flex; }
.tab-body { flex: 1; height: 56px; padding: 0 12px 0 16px; display: flex; align-items: center; font-size: 24px; letter-spacing: -.1px; }
.tab span { flex: none; width: 340px; margin: 0 6px 0 16px; overflow: hidden; white-space: nowrap; -webkit-mask-image: linear-gradient(90deg, #000 290px, transparent 336px); mask-image: linear-gradient(90deg, #000 290px, transparent 336px); }
.tab .close { margin-left: 11px; width: 20px; height: 20px; stroke: #202124; stroke-width: 3; }
.tab.ruled { padding-right: 4px; }
.tab.ruled .tab-body { border-right: 3px solid transparent; border-image: linear-gradient(transparent 12px, #fbdfe4 12px 44px, transparent 44px) 1; }
.tab.active { position: relative; }
.tab.active .tab-body { height: 68px; padding-bottom: 12px; background: #fae1e5; border-radius: 20px 20px 0 0; }
.tab.active::before, .tab.active::after { content: ""; position: absolute; bottom: 0; width: 20px; height: 20px; }
.tab.active::before { left: -20px; background: radial-gradient(circle at 0 0, transparent 20px, #fae1e5 20.500px); }
.tab.active::after { right: -9px; background: radial-gradient(circle at 100% 0, transparent 20px, #fae1e5 20.500px); }
.globe-grey { color: #5f6368; }
.globe-land { fill: var(--land, #fae1e5); }
.on-strip { --land: #f4b1bf; }
.newtab { width: 24px; height: 24px; margin: 16px 0 0 16px; stroke: #202124; stroke-width: 2.600; }
.spark { width: 56px; height: 56px; margin: 0 14px 0 auto; border-radius: 20px; background: #fae1e5; display: grid; place-items: center; }
.spark svg { width: 26px; height: 26px; fill: #202124; }

.toolbar {
  flex: none; height: 92px; padding-left: 24px; background: #fae1e5; display: grid; align-items: center;
  grid-template-columns: 72px 72px 72px 72px 2033px 72px 72px 73px 72px 73px 67px 40px 72px 68px 40px 68px 65px 317px;
}
.nav, .nav-off { fill: none; stroke: #202124; stroke-width: 3.200; }
.nav-off { stroke: #a5979b; }
.omnibox { width: 1997px; height: 68px; padding: 0 32px 0 10px; border-radius: 34px; background: #dcc8cb; display: flex; align-items: center; }
.site { width: 48px; height: 48px; border-radius: 50%; background: #fae1e5; display: grid; place-items: center; margin-right: 16px; }
.site svg { width: 28px; height: 28px; fill: none; stroke: #202124; stroke-width: 2.800; }
.url { font-size: 28px; letter-spacing: .16px; }
.star { width: 32px; height: 32px; margin-left: auto; fill: none; stroke: #5f6368; stroke-width: 1.900; }
.ext { width: 32px; height: 32px; border-radius: 5px; color: #fff; display: grid; place-items: center; font-size: 26px; line-height: 32px; font-weight: 700; }
.honey { background: #c1c1c0; font-family: "Liberation Serif", serif; font-style: italic; }
.rakuten { background: #7d43b0; font-family: "Liberation Serif", serif; font-style: italic; border-radius: 3px; }
.kami { background: #7431c9; border-radius: 50%; font-weight: 800; }
.dark { fill: none; stroke: #202124; stroke-width: 3; }
.thick { stroke-width: 3.600; }
hr { margin: 0; border: 0; width: 4px; height: 32px; border-radius: 2px; background: #f4b1bf; }
.avatar { width: 40px; height: 40px; border-radius: 50%; background: radial-gradient(ellipse 9px 12px at 34% 45%, #c97bb8 0 60%, transparent), radial-gradient(ellipse 7px 9px at 70% 40%, #b97cc0 0 60%, transparent), radial-gradient(circle at 75% 85%, #b9a8f0 0 14%, transparent 28%), linear-gradient(160deg, #7a35d8, #3a1d74 45%, #20103c); }
.relaunch { width: 317px; height: 68px; padding: 0 0 0 23px; border: 0; border-radius: 34px; background: #f4b1bf; font: 500 25px Inter, sans-serif; letter-spacing: .35px; color: #202124; display: flex; align-items: center; white-space: nowrap; }
.relaunch svg { width: 8px; height: 32px; margin: 0 29px 0 auto; }

.bookmarks {
  flex: none; height: 70px; padding: 0 0 12px 36px; background: #fae1e5; border-bottom: 2px solid #cbb8bf; display: grid; align-items: center;
  grid-template-columns: 60px 32px 312px 140px 308px 264px 274px 232px 150px 190px 170px 204px 234px 516px 61px 35px 1fr;
  font-size: 24px; letter-spacing: -.1px; white-space: nowrap;
}
.bookmarks a { display: flex; align-items: center; gap: 12px; }
.more { width: 24px; height: 24px; }

.banner { flex: none; height: 90px; background: #19407e; border-bottom: 2px solid #2f5192; color: #fff; font-size: 28px; letter-spacing: -.34px; display: flex; align-items: center; justify-content: space-between; padding: 2px 48px 0 32px; position: relative; z-index: 2; box-shadow: 0 4px 24px rgba(0,0,0,.18); }
.banner a { text-decoration: underline; text-decoration-thickness: 2px; text-underline-offset: 4px; font-weight: 500; }
.banner svg { width: 24px; height: 24px; stroke: #d5ddea; stroke-width: 2.200; }

/* host list */
.page { flex: 1; min-height: 0; display: flex; background: #f8fafc; position: relative; overflow: hidden; color: #374151; }
.page::after { content: ""; position: absolute; inset: auto 0 0 0; height: 130px; background: linear-gradient(transparent, rgba(0,0,0,.075)); pointer-events: none; z-index: 1; }
.sidebar { width: 512px; background: #fff; border-right: 2px solid #e1e4e9; }
.panel { width: 2848px; margin-left: 48px; padding: 0 48px; background: #fff; border: solid #dee1e6; border-width: 0 2px; }
.card { margin-bottom: 32px; padding: 32px 48px 64px; border: 2px solid #dee1e6; border-radius: 16px; background: #fff; box-shadow: 0 2px 4px rgba(0,0,0,.05); display: flex; gap: 46px; }
.card.stub { height: 22px; padding: 0; border-top: 0; border-radius: 0 0 16px 16px; }
.host { flex: 1; }
h3 { height: 56px; margin-bottom: 24px; display: flex; align-items: center; gap: 16px; font-size: 36px; font-weight: 600; letter-spacing: -.5px; color: #111827; }
h3 svg { width: 40px; height: 40px; stroke: #3662e3; }
.page svg { fill: none; stroke-width: 2; stroke-linecap: round; stroke-linejoin: round; }
.contact { border-left: 4px solid #bfd7f8; padding-left: 32px; min-height: 160px; margin-bottom: 24px; }
.contact:last-child { margin-bottom: 0; }
.row { display: flex; align-items: center; height: 56px; }
.row + .row { height: 88px; margin-top: 16px; gap: 24px; }
.name { font-size: 32px; font-weight: 500; letter-spacing: -.52px; color: #111827; }
.badge { height: 44px; margin-left: 17px; padding: 0 20px; border: 2px solid #dee1e6; border-radius: 22px; font-size: 24px; line-height: 40px; font-weight: 600; letter-spacing: .15px; }
.acts { margin-left: auto; display: flex; gap: 40px; font-size: 28px; font-weight: 500; }
.acts a { display: flex; align-items: center; gap: 8px; }
.acts svg { width: 32px; height: 32px; stroke: currentColor; }
.del { color: #d0372c; }
.tel { height: 88px; padding: 0 24px; border-radius: 16px; background: #eff6ff; color: #274bcf; font-size: 36px; font-weight: 500; letter-spacing: -.32px; display: flex; align-items: center; gap: 16px; }
.tel svg { width: 32px; height: 32px; stroke: #4069e6; }
.mail { display: flex; align-items: center; gap: 16px; font-size: 28px; letter-spacing: -.4px; color: #4b5563; }
.mail svg { width: 32px; height: 32px; stroke: currentColor; }
.buttons { display: flex; flex-direction: column; gap: 16px; width: 258px; }
.buttons.last { padding-top: 88px; }
.buttons button { height: 72px; border: 2px solid #dee1e6; border-radius: 12px; background: #f5f6f9; font: 500 28px Inter, sans-serif; letter-spacing: -.1px; color: #374151; display: flex; align-items: center; justify-content: center; gap: 8px; padding: 0 0 0 2px; white-space: nowrap; }
.buttons svg { width: 32px; height: 32px; stroke: currentColor; }
.toast { position: absolute; left: 2648px; top: 1492px; width: 776px; height: 188px; padding: 48px; border: 2px solid #dee1e6; border-radius: 12px; background: #f5f6f9; box-shadow: 0 10px 30px rgba(0,0,0,.12); font-size: 28px; line-height: 40px; letter-spacing: -.36px; color: #4b5563; z-index: 2; }
.toast strong { display: block; font-weight: 600; color: #374151; margin-bottom: 8px; }

/* note behind the dock */
.sticky { position: absolute; left: 3180px; top: 2090px; width: 276px; height: 144px; overflow: hidden; background: linear-gradient(#1f1e10 30px, #8f8a55 60px, #f4ec9a 100px); padding: 46px 0 0 22px; color: #0c0c05; font: 700 25px/32px "Liberation Sans", sans-serif; letter-spacing: -.6px; white-space: nowrap; }
.sticky p + p { margin-top: 46px; }
body::before { content: ""; position: absolute; left: 0; top: 2100px; width: 3180px; height: 44px; background: linear-gradient(#020407, #000306 36px, #0a0d08); }

/* dock */
.dock {
  position: relative; z-index: 2; flex: none; margin: 24px 0 0 45px; width: 3367px; height: 80px; padding-left: 2.500px; border: 2px solid rgba(255,255,255,.18); border-radius: 26px; display: flex;
  background: linear-gradient(90deg, #5f6c5c 0, #5d6864 500px, #5e6a62 800px, #66705a 1300px, #66695c 1440px, #635f58 1600px, #6e6056 2060px, #656860 2180px, #5c6863 2450px, #62665f 2750px, #85745f 3000px, #b3a972 3130px, #c9c384 3367px);
}
.app { width: 61.100px; height: 76px; padding: 11px 0 0 7px; position: relative; flex: none; }
.app > svg, .cal, .tv { width: 47px; height: 47px; border-radius: 11px; box-shadow: 0 1px 2px rgba(0,0,0,.35); overflow: hidden; }
.app.on::after { content: ""; position: absolute; left: 28px; top: 68px; width: 6px; height: 6px; border-radius: 50%; background: #000; }
.app em { position: absolute; right: -2px; top: 6px; min-width: 22px; height: 22px; padding: 0 3px; border-radius: 11px; background: #e5483c; color: #fff; font: 500 13px/22px Inter, sans-serif; letter-spacing: -.3px; text-align: center; }
.app > svg.free { width: 58px; height: 54px; margin: -3px 0 0 -6px; border-radius: 0; box-shadow: none; overflow: visible; }
.cal { background: #fbfaf8; text-align: center; }
.cal small { display: block; height: 14px; background: #e2554a; color: #fff; font: 600 10px/15px Inter, sans-serif; }
.cal span { font: 300 29px/31px Inter, sans-serif; }
.tv { background: #16201d; color: #fff; display: flex; align-items: center; justify-content: center; gap: 1px; font-size: 20px; font-weight: 500; }
.tv svg { width: 14px; height: 15px; fill: #fff; }
.rule { flex: none; width: 2px; height: 60px; margin: 8px 12.500px 0 14.500px; background: rgba(20,22,18,.6); }
.app.doc { padding-top: 6px; padding-left: 12px; }
.app.doc > svg { width: 38px; height: 54px; border-radius: 0; box-shadow: none; }
.doc small { position: absolute; left: 12px; top: 47px; width: 38px; text-align: center; font-size: 10px; color: #777; }
.mini { padding: 0; }
.app.mini > svg { position: absolute; left: 38px; top: 43px; width: 18px; height: 18px; border-radius: 4px; box-shadow: none; }
.app.mini { padding: 19px 0 0 3.500px; }
.thumb { display: block; width: 54px; height: 32px; border-top: 2px solid #f0b9c2; }
.t1 { background: linear-gradient(90deg, transparent 32%, #eef5fa 32% 38%, transparent 38% 64%, #eef5fa 64% 70%, transparent 70%), repeating-linear-gradient(#a9d4ea 0 8px, #eef5fa 8px 11px); }
.t2 { background: linear-gradient(90deg, #2b3350 12%, transparent 12%), linear-gradient(#46506e 8px, #c5c4cf 8px 24px, #a4a3b5 24px); }
.t3 { background: repeating-linear-gradient(90deg, #1e2636 0 7px, #2c3547 7px 9px); }
.t4 { background: linear-gradient(#eef3fa 10px, #e5bb3c 10px 13px, transparent 13px), repeating-linear-gradient(90deg, #f5f5f3 0 5px, #cfcfcb 5px 6px); }
.t5 { background: linear-gradient(90deg, #f7f6f4 50%, transparent 50%), linear-gradient(#f7f6f4 9px, #5f8fd8 9px 14px, #f7f6f4 14px 20px, #ee8a5c 20px 23px, #f7f6f4 23px); }
.t6 { background: radial-gradient(circle at 60% 20%, #7a35b8, #401a78 70%); }
```
